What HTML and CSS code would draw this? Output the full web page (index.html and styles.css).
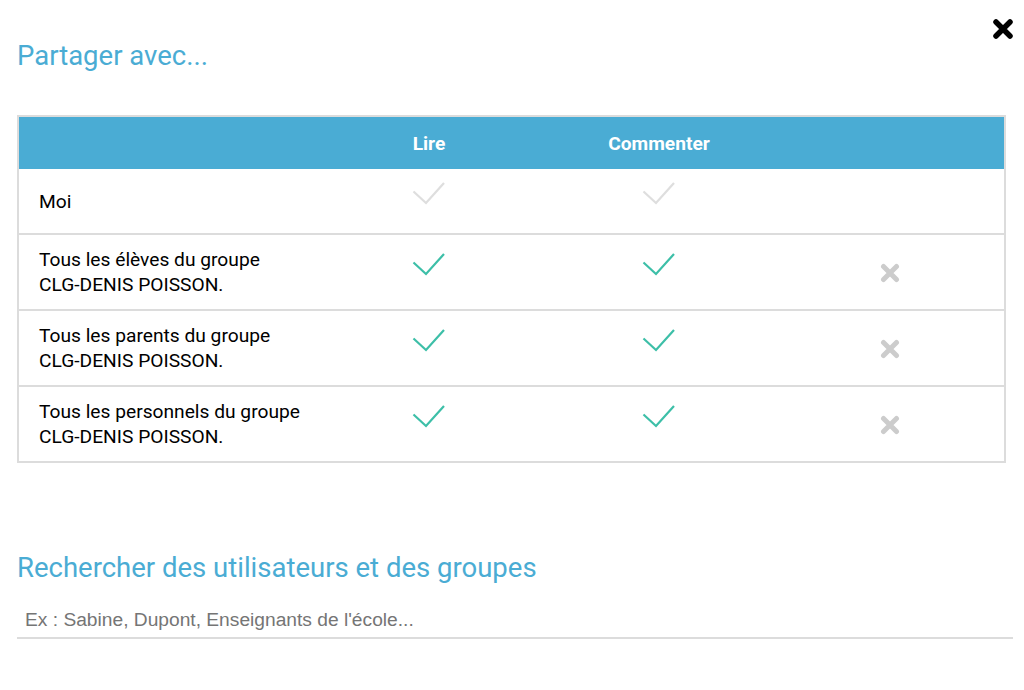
FILE: index.html
```html
<!DOCTYPE html>
<html lang="fr">
<head>
<meta charset="utf-8">
<title>Partager avec...</title>
<link rel="stylesheet" href="styles.css">
</head>
<body>
<div class="modal">
  <button class="close" aria-label="Fermer"><svg viewBox="0 0 22 22" width="22" height="22"><path d="M4 4 L18 18 M18 4 L4 18" /></svg></button>
  <h2 class="title">Partager avec...</h2>
  <table class="share">
    <thead>
      <tr>
        <th class="c-name"></th>
        <th class="c-act">Lire</th>
        <th class="c-act">Commenter</th>
        <th class="c-act"></th>
      </tr>
    </thead>
    <tbody>
      <tr class="r-me">
        <td class="c-name">Moi</td>
        <td class="c-act"><svg class="chk off" viewBox="0 0 34 36" width="34" height="36"><polyline points="1.5,13.5 14,25 32,5" /></svg></td>
        <td class="c-act"><svg class="chk off" viewBox="0 0 34 36" width="34" height="36"><polyline points="1.5,13.5 14,25 32,5" /></svg></td>
        <td class="c-act"></td>
      </tr>
      <tr>
        <td class="c-name">Tous les élèves du groupe<br>CLG-DENIS POISSON.</td>
        <td class="c-act"><svg class="chk on" viewBox="0 0 34 36" width="34" height="36"><polyline points="1.5,13.5 14,25 32,5" /></svg></td>
        <td class="c-act"><svg class="chk on" viewBox="0 0 34 36" width="34" height="36"><polyline points="1.5,13.5 14,25 32,5" /></svg></td>
        <td class="c-act"><svg class="rm" viewBox="0 0 20 20" width="20" height="20"><path d="M3.5 3.5 L16.5 16.5 M16.5 3.5 L3.5 16.5" /></svg></td>
      </tr>
      <tr>
        <td class="c-name">Tous les parents du groupe<br>CLG-DENIS POISSON.</td>
        <td class="c-act"><svg class="chk on" viewBox="0 0 34 36" width="34" height="36"><polyline points="1.5,13.5 14,25 32,5" /></svg></td>
        <td class="c-act"><svg class="chk on" viewBox="0 0 34 36" width="34" height="36"><polyline points="1.5,13.5 14,25 32,5" /></svg></td>
        <td class="c-act"><svg class="rm" viewBox="0 0 20 20" width="20" height="20"><path d="M3.5 3.5 L16.5 16.5 M16.5 3.5 L3.5 16.5" /></svg></td>
      </tr>
      <tr>
        <td class="c-name">Tous les personnels du groupe<br>CLG-DENIS POISSON.</td>
        <td class="c-act"><svg class="chk on" viewBox="0 0 34 36" width="34" height="36"><polyline points="1.5,13.5 14,25 32,5" /></svg></td>
        <td class="c-act"><svg class="chk on" viewBox="0 0 34 36" width="34" height="36"><polyline points="1.5,13.5 14,25 32,5" /></svg></td>
        <td class="c-act"><svg class="rm" viewBox="0 0 20 20" width="20" height="20"><path d="M3.5 3.5 L16.5 16.5 M16.5 3.5 L3.5 16.5" /></svg></td>
      </tr>
    </tbody>
  </table>
  <h2 class="title search-title">Rechercher des utilisateurs et des groupes</h2>
  <input class="search" type="text" placeholder="Ex : Sabine, Dupont, Enseignants de l'école...">
</div>
</body>
</html>
```
FILE: styles.css
```css
html, body {
  margin: 0;
  padding: 0;
  background: #fff;
}
body {
  font-family: Roboto, "Liberation Sans", sans-serif;
  color: #000;
}
.modal {
  position: relative;
  padding: 0 10px 0 17px;
}
.close {
  position: absolute;
  top: 18px;
  right: 10px;
  border: 0;
  background: none;
  padding: 0;
  width: 22px;
  height: 22px;
  cursor: pointer;
}
.close svg {
  display: block;
  stroke: #000;
  stroke-width: 5.5;
  stroke-linecap: round;
  fill: none;
}
.title {
  margin: 0;
  padding-top: 39px;
  font-weight: 400;
  font-size: 27.5px;
  line-height: 34px;
  color: #4aacd4;
}
.share {
  margin-top: 42px;
  width: 989px;
  border-collapse: collapse;
  border: 2px solid #dcdcdc;
  font-size: 19.2px;
}
.share th {
  background: #4aacd4;
  color: #fff;
  font-weight: 700;
  height: 52px;
  padding: 0;
  text-align: center;
}
.share td {
  border-top: 2px solid #dcdcdc;
  padding: 0;
  vertical-align: middle;
  line-height: 25px;
}
.share thead + tbody tr:first-child td {
  border-top: 0;
}
.share .c-name {
  width: 275px;
  padding-left: 20px;
  text-align: left;
}
.share td.c-act, .share th.c-act {
  width: 230px;
  text-align: center;
}
.r-me td {
  height: 64px;
}
.share tbody tr:not(.r-me) td {
  height: 74px;
}
.chk {
  display: inline-block;
  vertical-align: middle;
  fill: none;
  stroke-width: 2.2;
  margin-top: -10px;
}
.chk.off { stroke: #dedede; }
.chk.on { stroke: #3dbfa8; }
.rm {
  display: inline-block;
  vertical-align: middle;
  fill: none;
  stroke: #cccccc;
  stroke-width: 5;
  stroke-linecap: round;
  margin-left: 2px;
}
.search-title {
  padding-top: 88px;
}
.search {
  display: block;
  box-sizing: border-box;
  width: 996px;
  margin-top: 20px;
  border: 0;
  border-bottom: 2px solid #dcdcdc;
  padding: 4px 8px 6px;
  font-family: "Liberation Sans", Arial, sans-serif;
  font-size: 19.2px;
  color: #333;
  outline: none;
  background: transparent;
}
.search::placeholder {
  color: #757575;
}
```
